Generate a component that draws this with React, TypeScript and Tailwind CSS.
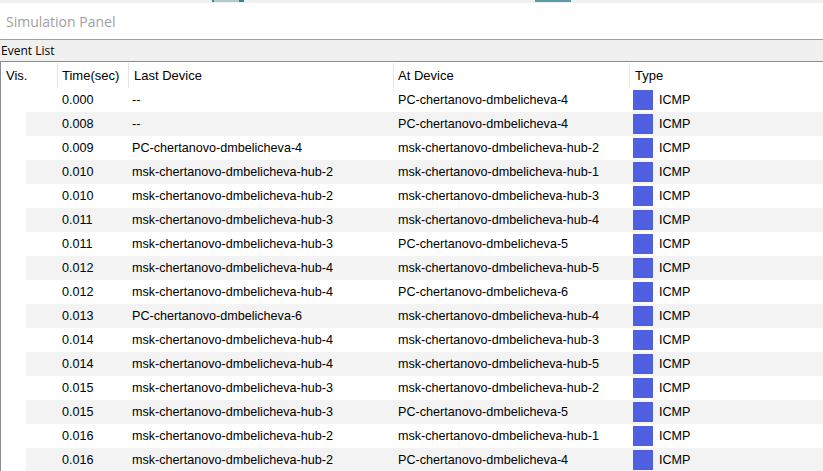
const rows: [string, string, string][] = [
	["0.000", "--", "PC-chertanovo-dmbelicheva-4"],
	["0.008", "--", "PC-chertanovo-dmbelicheva-4"],
	["0.009", "PC-chertanovo-dmbelicheva-4", "msk-chertanovo-dmbelicheva-hub-2"],
	["0.010", "msk-chertanovo-dmbelicheva-hub-2", "msk-chertanovo-dmbelicheva-hub-1"],
	["0.010", "msk-chertanovo-dmbelicheva-hub-2", "msk-chertanovo-dmbelicheva-hub-3"],
	["0.011", "msk-chertanovo-dmbelicheva-hub-3", "msk-chertanovo-dmbelicheva-hub-4"],
	["0.011", "msk-chertanovo-dmbelicheva-hub-3", "PC-chertanovo-dmbelicheva-5"],
	["0.012", "msk-chertanovo-dmbelicheva-hub-4", "msk-chertanovo-dmbelicheva-hub-5"],
	["0.012", "msk-chertanovo-dmbelicheva-hub-4", "PC-chertanovo-dmbelicheva-6"],
	["0.013", "PC-chertanovo-dmbelicheva-6", "msk-chertanovo-dmbelicheva-hub-4"],
	["0.014", "msk-chertanovo-dmbelicheva-hub-4", "msk-chertanovo-dmbelicheva-hub-3"],
	["0.014", "msk-chertanovo-dmbelicheva-hub-4", "msk-chertanovo-dmbelicheva-hub-5"],
	["0.015", "msk-chertanovo-dmbelicheva-hub-3", "msk-chertanovo-dmbelicheva-hub-2"],
	["0.015", "msk-chertanovo-dmbelicheva-hub-3", "PC-chertanovo-dmbelicheva-5"],
	["0.016", "msk-chertanovo-dmbelicheva-hub-2", "msk-chertanovo-dmbelicheva-hub-1"],
	["0.016", "msk-chertanovo-dmbelicheva-hub-2", "PC-chertanovo-dmbelicheva-4"],
]

const App = () => {
	return (
		<div className="w-[823px] h-[471px] overflow-hidden bg-white text-black font-['Liberation_Sans',Arial,sans-serif]">
			{/* strip left over from the window above */}
			<div className="h-[3px] bg-[#f0f0f0] flex items-start">
				<div className="ml-[212px] w-[32px] h-[2px] flex">
					<div className="w-[2px] bg-[#3a8396]" />
					<div className="flex-1 bg-[#b2cbd3]" />
					<div className="w-[5px] bg-[#3a8396]" />
				</div>
				<div className="ml-[291px] w-[36px] h-[2px] bg-[#5d9aa8]" />
			</div>

			<div className="h-[36px] flex items-center pl-[6px] text-[14px] text-[#a0a0a0] font-['Open_Sans',sans-serif]">
				Simulation Panel
			</div>

			<div className="h-[22px] border-t border-[#a0a0a0] bg-[#f0f0f0] flex items-center pl-[1px] text-[12px] font-['Open_Sans',sans-serif]">
				Event List
			</div>

			<div className="border-t border-[#8c8c94] border-l">
				<div className="h-[26px] flex items-center text-[13px] pt-[1px]">
					<div className="w-[56px] h-full pl-[5px] flex items-center">Vis.</div>
					<div className="w-[71px] h-full pl-[4px] flex items-center border-l border-[#e5e5e5]">Time(sec)</div>
					<div className="w-[265px] h-full pl-[5px] flex items-center border-l border-[#e5e5e5]">Last Device</div>
					<div className="w-[236px] h-full pl-[4px] flex items-center border-l border-[#e5e5e5]">At Device</div>
					<div className="flex-1 h-full pl-[5px] flex items-center border-l border-[#e5e5e5]">Type</div>
				</div>

				{rows.map(([time, last, at], i) => (
					<div key={i} className="h-[24px] flex text-[12.6px]">
						<div className="w-[25px]" />
						<div className={"flex-1 flex items-center pt-[1px] " + (i % 2 === 1 ? "bg-[#f3f3f3]" : "bg-white")}>
							<div className="w-[31px]" />
							<div className="w-[71px] pl-[5px]">{time}</div>
							<div className="w-[265px] pl-[4px]">{last}</div>
							<div className="w-[236px] pl-[5px]">{at}</div>
							<div className="flex-1 pl-[4px] flex items-center gap-[6px]">
								<div className="w-[20px] h-[20px] bg-[#4f5fe0] -mt-[1px]" />
								<span>ICMP</span>
							</div>
						</div>
					</div>
				))}
			</div>
		</div>
	)
}
export default App
